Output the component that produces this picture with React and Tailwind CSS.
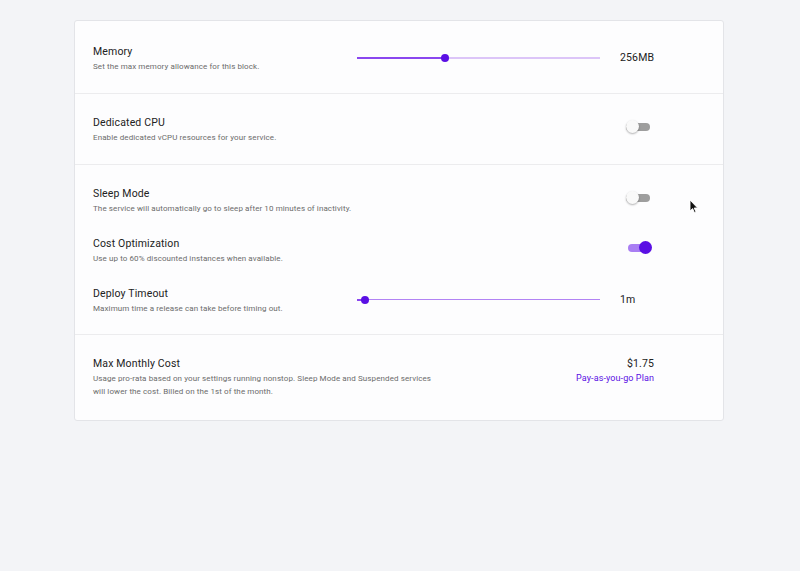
const font = { fontFamily: "Roboto, 'Liberation Sans', sans-serif" };

function Slider({ value, thin }) {
  return (
    <div className="relative w-[243px] h-[10px] flex items-center">
      <div className={`w-full ${thin ? "h-px bg-[#b283f4]" : "h-[2px] bg-[#dcc5f8]"}`} />
      <div className="absolute left-0 h-[2px] bg-[#8a47ef]" style={{ width: value }} />
      <div
        className="absolute top-[1px] w-[8px] h-[8px] rounded-full bg-[#5a0fe4]"
        style={{ left: value - 4 }}
      />
    </div>
  );
}

function Toggle({ on }) {
  return (
    <div className="relative w-[26px] h-[14px] flex items-center">
      <div
        className={`h-[8px] rounded-full ${
          on ? "ml-[2px] w-[22px] bg-[#a97ef3]" : "w-[24px] bg-[#9e9e9e]"
        }`}
      />
      <div
        className={`absolute w-[13px] h-[13px] rounded-full ${
          on
            ? "right-0 bg-[#5a0fe4]"
            : "left-0 bg-[#f9f9f9] shadow-[0_1px_2px_rgba(0,0,0,0.3)]"
        }`}
      />
    </div>
  );
}

function Label({ title, desc }) {
  return (
    <div>
      <div className="text-[10.5px] leading-[16px] tracking-[0.15px] text-[#222]">{title}</div>
      <div className="text-[8px] leading-[14px] tracking-[0.1px] text-[#6b6b6b]">{desc}</div>
    </div>
  );
}

function SliderRow({ title, desc, value, label, thin }) {
  return (
    <div className="flex items-center">
      <div className="w-[264px] shrink-0">
        <Label title={title} desc={desc} />
      </div>
      <div className="shrink-0 -mt-[3px]">
        <Slider value={value} thin={thin} />
      </div>
      <div className="shrink-0 pl-[20px] -mt-[3px] text-[10.5px] tracking-[0.15px] text-[#222]">{label}</div>
    </div>
  );
}

function ToggleRow({ title, desc, on }) {
  return (
    <div className="flex items-center justify-between pr-[2px]">
      <Label title={title} desc={desc} />
      <div className="-mt-[7px]">
        <Toggle on={on} />
      </div>
    </div>
  );
}

function Cursor() {
  return (
    <svg className="absolute left-[689px] top-[199px]" width="10" height="15" viewBox="0 0 10 15">
      <path d="M1 1 L1 12 L3.6 9.6 L5.4 13.6 L7 12.9 L5.2 9 L8.6 9 Z" fill="#111" stroke="#fff" strokeWidth="0.9" />
    </svg>
  );
}

export default function App() {
  return (
    <div className="relative min-h-[571px] bg-[#f3f4f7] pt-[20px]" style={font}>
      <div className="ml-[74px] w-[650px] bg-[#fdfdfe] border border-[#e3e4e8] rounded-[3px]">
        <div className="pl-[18px] pr-[69px] pt-[23px] pb-[19px] border-b border-[#ececee]">
          <SliderRow
            title="Memory"
            desc="Set the max memory allowance for this block."
            value={88}
            label="256MB"
          />
        </div>
        <div className="pl-[18px] pr-[69px] pt-[21px] pb-[19px] border-b border-[#ececee]">
          <ToggleRow
            title="Dedicated CPU"
            desc="Enable dedicated vCPU resources for your service."
          />
        </div>
        <div className="pl-[18px] pr-[69px] pt-[21px] pb-[18px] flex flex-col gap-5 border-b border-[#ececee]">
          <ToggleRow
            title="Sleep Mode"
            desc="The service will automatically go to sleep after 10 minutes of inactivity."
          />
          <ToggleRow
            title="Cost Optimization"
            desc="Use up to 60% discounted instances when available."
            on
          />
          <SliderRow
            title="Deploy Timeout"
            desc="Maximum time a release can take before timing out."
            value={8}
            label="1m"
            thin
          />
        </div>
        <div className="pl-[18px] pr-[69px] pt-[21px] pb-[22px] flex justify-between">
          <div>
            <div className="text-[10.5px] leading-[16px] tracking-[0.15px] text-[#222]">Max Monthly Cost</div>
            <div className="w-[345px] text-[8px] leading-[13px] tracking-[0.1px] text-[#6b6b6b]">
              Usage pro-rata based on your settings running nonstop. Sleep Mode and Suspended services
              will lower the cost. Billed on the 1st of the month.
            </div>
          </div>
          <div className="text-right">
            <div className="text-[10.5px] leading-[16px] tracking-[0.15px] text-[#222]">$1.75</div>
            <div className="text-[9px] leading-[13px] tracking-[0.1px] text-[#5a0fe4]">
              Pay-as-you-go Plan
            </div>
          </div>
        </div>
      </div>
      <Cursor />
    </div>
  );
}
